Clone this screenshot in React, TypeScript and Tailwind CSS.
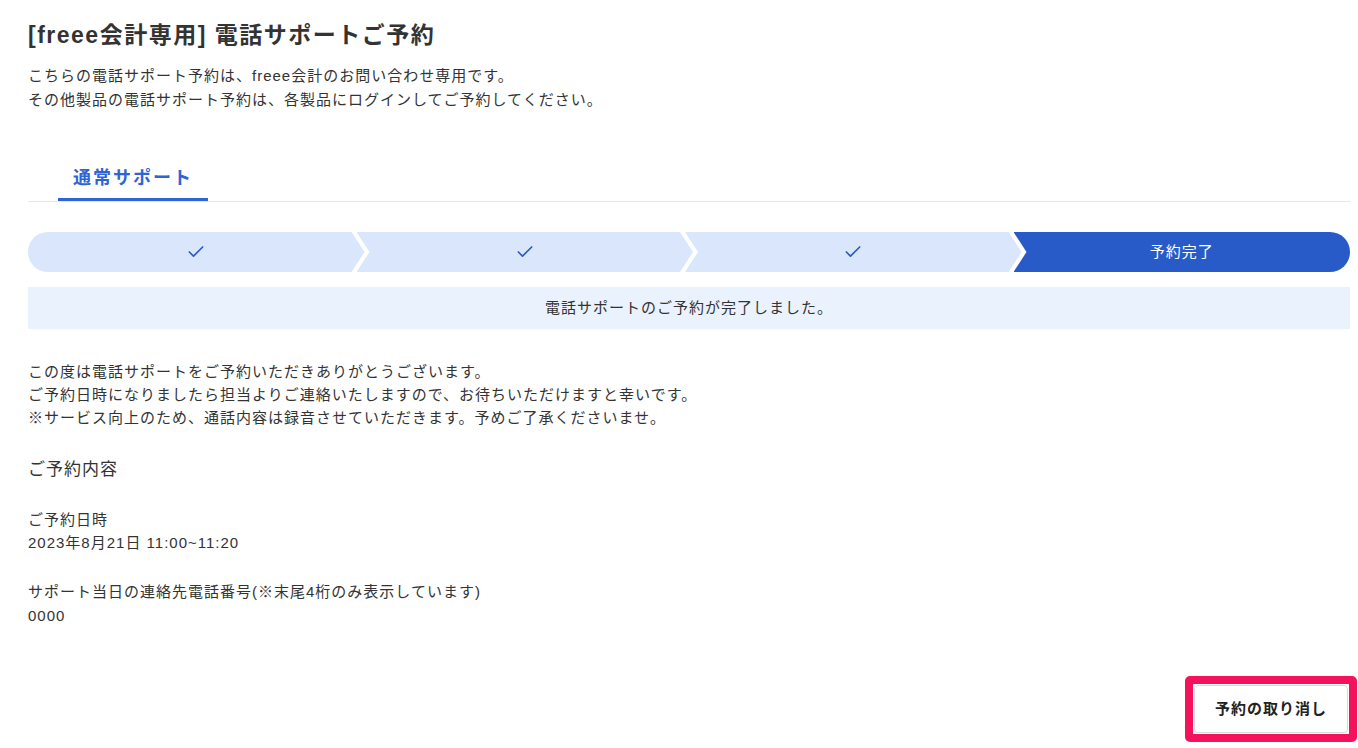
import { Check } from "lucide-react";

const FONT = { fontFamily: '"Liberation Sans", "Noto Sans CJK JP", sans-serif' };

const STEPS = [
  { done: true, label: "" },
  { done: true, label: "" },
  { done: true, label: "" },
  { done: false, label: "予約完了" },
];

function Stepper() {
  return (
    <div className="flex h-10 w-full">
      {STEPS.map((s, i) => {
        const first = i === 0;
        const last = i === STEPS.length - 1;
        const clip = first
          ? "[clip-path:polygon(0_0,calc(100%-13px)_0,100%_50%,calc(100%-13px)_100%,0_100%)] rounded-l-full"
          : last
            ? "[clip-path:polygon(0_0,100%_0,100%_100%,0_100%,13px_50%)] rounded-r-full -ml-[8px]"
            : "[clip-path:polygon(0_0,calc(100%-13px)_0,100%_50%,calc(100%-13px)_100%,0_100%,13px_50%)] -ml-[8px]";
        return (
          <div
            key={i}
            className={`flex flex-1 items-center justify-center ${clip} ${
              s.done ? "bg-[#d9e6fb]" : "bg-[#285bc8] text-white"
            }`}
          >
            {s.done ? (
              <Check className="h-5 w-5 text-[#2d5cc6]" strokeWidth={2} />
            ) : (
              <span className="text-[15px] tracking-[1px]">{s.label}</span>
            )}
          </div>
        );
      })}
    </div>
  );
}

export default function App() {
  return (
    <div
      style={FONT}
      className="min-h-[748px] bg-white pl-7 pr-2 pt-[19px] text-[#333333] tracking-[1px]"
    >
      <h1 className="text-[23px] font-bold leading-8 tracking-[1.5px]">
        [freee会計専用] 電話サポートご予約
      </h1>
      <div className="mt-[13px] text-[15px] leading-6">
        <p>こちらの電話サポート予約は、freee会計のお問い合わせ専用です。</p>
        <p>その他製品の電話サポート予約は、各製品にログインしてご予約してください。</p>
      </div>

      {/* Tabs */}
      <div className="mt-[52px] border-b border-[#e6e6e6]">
        <div className="ml-[30px] inline-block border-b-[3px] border-[#2f64d6] px-[15px] pb-[6px]">
          <span className="text-lg font-bold leading-7 tracking-[2px] text-[#2f64d6]">通常サポート</span>
        </div>
      </div>

      <div className="mt-[30px]">
        <Stepper />
      </div>

      <div className="mt-[15px] flex h-[42px] items-center justify-center bg-[#eaf2fd] text-[15px]">
        電話サポートのご予約が完了しました。
      </div>

      <div className="mt-[31px] text-[15px] leading-[23px]">
        <p>この度は電話サポートをご予約いただきありがとうございます。</p>
        <p>ご予約日時になりましたら担当よりご連絡いたしますので、お待ちいただけますと幸いです。</p>
        <p>※サービス向上のため、通話内容は録音させていただきます。予めご了承くださいませ。</p>
      </div>

      <h2 className="mt-[29px] text-[17px] leading-6">ご予約内容</h2>

      <div className="mt-[26px] text-[15px] leading-[23px]">
        <p>ご予約日時</p>
        <p>2023年8月21日 11:00~11:20</p>
      </div>

      <div className="mt-[26px] text-[15px] leading-6">
        <p>サポート当日の連絡先電話番号(※末尾4桁のみ表示しています)</p>
        <p>0000</p>
      </div>

      <div className="-mr-[7px] mt-[48px] flex justify-end">
        <div className="rounded-[5px] border-8 border-[#f5125c] p-px">
          <button
            type="button"
            className="h-12 w-[154px] rounded-[4px] border border-[#d6dbe0] bg-white text-[15px] font-bold tracking-[1px] text-[#222]"
          >
            予約の取り消し
          </button>
        </div>
      </div>
    </div>
  );
}
